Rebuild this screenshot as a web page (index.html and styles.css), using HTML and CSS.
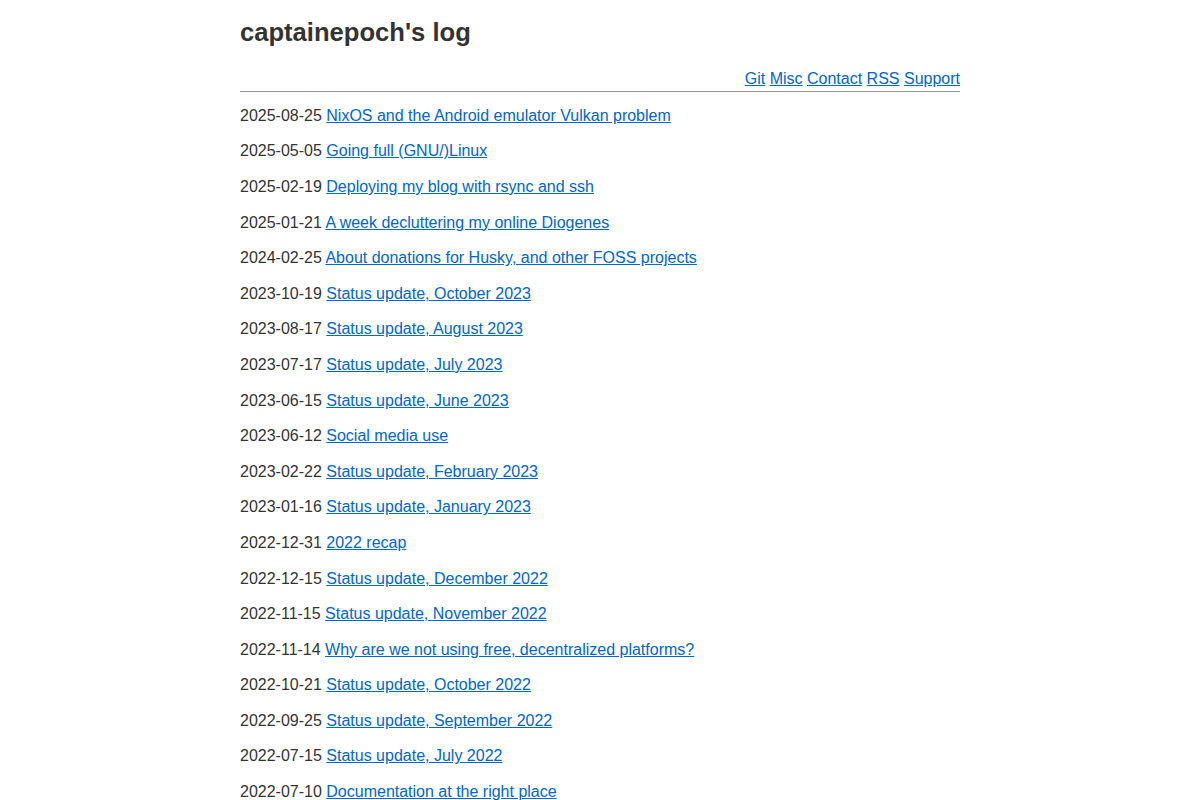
FILE: index.html
```html
<!DOCTYPE html>
<html lang="en">
<head>
    <meta charset="UTF-8">
    <meta name="viewport" content="width=device-width, initial-scale=1.0">
    <link rel="stylesheet" href="styles.css">
    <title>captainepoch's log</title>
</head>
<body>
    <div class="page">
        <h1 class="title">captainepoch's log</h1>
        <nav class="menu">
            <a href="#">Git</a>
            <a href="#">Misc</a>
            <a href="#">Contact</a>
            <a href="#">RSS</a>
            <a href="#">Support</a>
        </nav>

        <ul class="posts">
            <li>2025-08-25 <a href="#">NixOS and the Android emulator Vulkan problem</a></li>
            <li>2025-05-05 <a href="#">Going full (GNU/)Linux</a></li>
            <li>2025-02-19 <a href="#">Deploying my blog with rsync and ssh</a></li>
            <li>2025-01-21 <a href="#">A week decluttering my online Diogenes</a></li>
            <li>2024-02-25 <a href="#">About donations for Husky, and other FOSS projects</a></li>
            <li>2023-10-19 <a href="#">Status update, October 2023</a></li>
            <li>2023-08-17 <a href="#">Status update, August 2023</a></li>
            <li>2023-07-17 <a href="#">Status update, July 2023</a></li>
            <li>2023-06-15 <a href="#">Status update, June 2023</a></li>
            <li>2023-06-12 <a href="#">Social media use</a></li>
            <li>2023-02-22 <a href="#">Status update, February 2023</a></li>
            <li>2023-01-16 <a href="#">Status update, January 2023</a></li>
            <li>2022-12-31 <a href="#">2022 recap</a></li>
            <li>2022-12-15 <a href="#">Status update, December 2022</a></li>
            <li>2022-11-15 <a href="#">Status update, November 2022</a></li>
            <li>2022-11-14 <a href="#">Why are we not using free, decentralized platforms?</a></li>
            <li>2022-10-21 <a href="#">Status update, October 2022</a></li>
            <li>2022-09-25 <a href="#">Status update, September 2022</a></li>
            <li>2022-07-15 <a href="#">Status update, July 2022</a></li>
            <li>2022-07-10 <a href="#">Documentation at the right place</a></li>
        </ul>
    </div>
</body>
</html>
```

FILE: styles.css
```css
body{margin: 0;font-family: "Liberation Sans", Arial, sans-serif;font-size: 16px;color: #333;background: #fff;}
.page{width: 720px;margin: 0 auto;}
.title{font-size: 25.6px;font-weight: bold;margin: 0;padding-top: 17px;line-height: 30px;}
.menu{text-align: right;margin-top: 23px;padding-bottom: 3px;border-bottom: 1px solid #999;line-height: 18px;}
a{color: #0066cc;}
.posts{list-style: none;margin: 0;padding: 0;padding-top: 6px;}
.posts li{line-height: 18px;padding: 8.8px 0;}
```
